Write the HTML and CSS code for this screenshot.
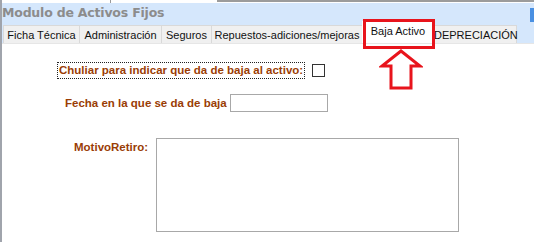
FILE: index.html
```html
<!DOCTYPE html>
<html>
<head>
  <meta charset="UTF-8">
  <title>Modulo de Activos Fijos</title>
  <link rel="stylesheet" href="styles.css">
</head>
<body>

  <div class="top-strip">
    <div class="top-tab"></div>
    <div class="top-line"></div>
  </div>

  <div class="header">
    <div class="title">Modulo de Activos Fijos</div>
    <div class="header-btn"></div>
  </div>

  <div class="tabbar">
    <div class="tab">Ficha Técnica</div>
    <div class="tab">Administración</div>
    <div class="tab">Seguros</div>
    <div class="tab">Repuestos-adiciones/mejoras</div>
    <div class="tab active">Baja Activo</div>
    <div class="tab">DEPRECIACIÓN</div>
  </div>

  <div class="panel">
    <div class="row row-check">
      <label class="lbl focus">Chuliar para indicar que da de baja al activo:</label>
      <span class="check"></span>
    </div>

    <div class="row row-date">
      <label class="lbl">Fecha en la que se da de baja</label>
      <input type="text" class="field">
    </div>

    <div class="row row-motivo">
      <label class="lbl">MotivoRetiro:</label>
      <textarea class="area"></textarea>
    </div>
  </div>

  <!-- anotacion -->
  <div class="highlight"></div>
  <svg class="arrow" width="44" height="42" viewBox="0 0 44 42">
    <polygon points="22,2 41,17 32,17 32,39 12,39 12,17 3,17" fill="none" stroke="#e8141c" stroke-width="3" stroke-linejoin="miter"/>
  </svg>

</body>
</html>
```

FILE: styles.css
```css
body {
  margin: 0;
  background: #ffffff;
  font-family: "Liberation Sans", Arial, sans-serif;
  height: 242px;
  overflow: hidden;
  border-left: 2px solid #a0a4ac;
  position: relative;
}

.top-strip {
  height: 3px;
  display: flex;
  background: #ffffff;
}

.top-tab {
  width: 108px;
  border-right: 1px solid #9a9a9a;
}

.top-line {
  margin-left: 106px;
  flex: 1;
  border-top: 2px solid #9c9c9c;
}

.header {
  background: #d5e7fc;
  height: 22px;
  display: flex;
  justify-content: space-between;
  align-items: flex-start;
}

.title {
  font-family: "DejaVu Sans", Verdana, sans-serif;
  font-weight: bold;
  font-size: 12.5px;
  color: #8c8c8c;
  padding-top: 2px;
  letter-spacing: -0.2px;
}

.header-btn {
  width: 4px;
  height: 14px;
  margin-top: 5px;
  background: #4a90e2;
}

.tabbar {
  background: #d5e7fc;
  display: flex;
  padding-left: 2px;
  height: 18px;
  border-bottom: 1px solid #e6e6e6;
}

.tab {
  flex-shrink: 0;
  white-space: nowrap;
  box-sizing: border-box;
  background: #f0f0f0;
  border: 1px solid #d9d9d9;
  border-bottom: none;
  margin-left: -1px;
  font-size: 11px;
  color: #111111;
  padding: 3px 0 0 0;
  height: 18px;
  text-align: center;
}

.tab:nth-child(1) { width: 77px; }
.tab:nth-child(2) { width: 83px; }
.tab:nth-child(3) { width: 51px; }
.tab:nth-child(4) { width: 152px; }
.tab:nth-child(6) { width: 84px; }

.tab.active {
  width: 72px;
  background: #ffffff;
  height: 22px;
  margin-top: -4px;
  padding-top: 4px;
  border: none;
}

.panel {
  display: flex;
  flex-direction: column;
}

.row {
  display: flex;
  align-items: flex-start;
}

.lbl {
  font-weight: bold;
  font-size: 11.5px;
  color: #9a3d05;
}

.row-check {
  padding-left: 55px;
  margin-top: 18px;
  align-items: center;
}

.focus {
  border: 1px dotted #222222;
  padding: 1px 1px 2px 1px;
}

.check {
  width: 11px;
  height: 11px;
  border: 1px solid #333333;
  margin-left: 7px;
  background: #ffffff;
}

.row-date {
  padding-left: 63px;
  margin-top: 15px;
  align-items: center;
}

.field {
  margin: 0 0 0 3px;
  width: 96px;
  height: 16px;
  padding: 0;
  border: 1px solid #a8a8a8;
}

.row-motivo {
  padding-left: 72px;
  margin-top: 26px;
}

.row-motivo .lbl {
  margin-top: 3px;
}

.area {
  margin: 0 0 0 8px;
  width: 301px;
  height: 92px;
  padding: 0;
  border: 1px solid #a8a8a8;
  resize: none;
}

.highlight {
  position: absolute;
  left: 361px;
  top: 19px;
  width: 66px;
  height: 24px;
  border: 3px solid #e8141c;
}

.arrow {
  position: absolute;
  left: 377px;
  top: 49px;
}
```
